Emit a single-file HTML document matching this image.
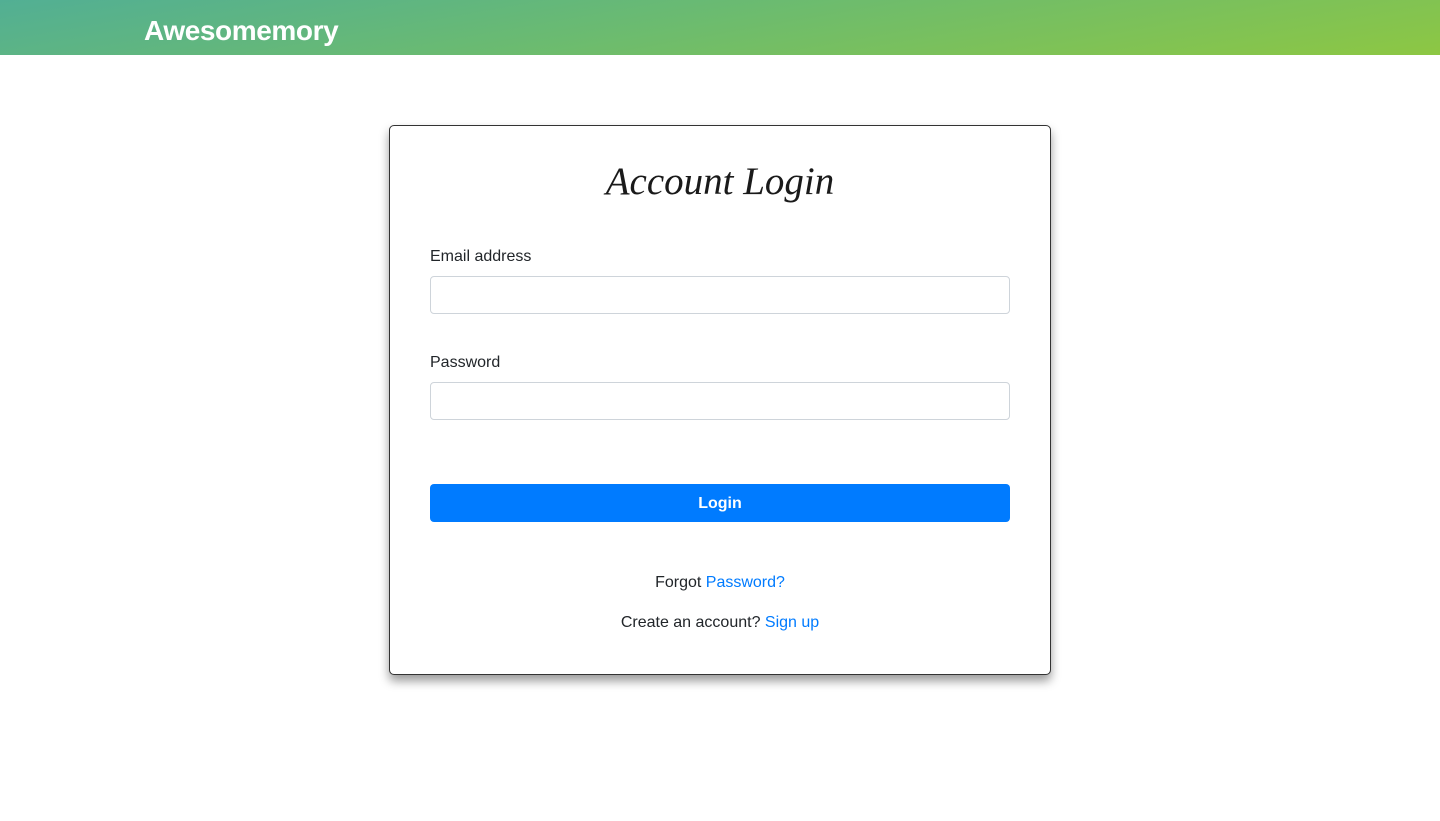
<!DOCTYPE html>
<html><head><meta charset="utf-8"><style>
*{box-sizing:border-box;margin:0;padding:0}
body{width:1440px;height:821px;background:#fff;font-family:"Liberation Sans",sans-serif;color:#212529;position:relative;overflow:hidden}
.hdr{position:absolute;left:0;top:0;width:1440px;height:55px;background:linear-gradient(170deg,#52af94 0%,#6bbb70 45%,#8dc743 100%)}
.hdr span{position:absolute;left:144px;top:15px;font-size:28px;font-weight:bold;color:#fff;letter-spacing:-0.4px}
.card{position:absolute;left:389px;top:125px;width:662px;height:550px;border:1px solid #333;border-radius:5px;background:#fff;box-shadow:0 6px 10px rgba(0,0,0,.4)}
h1{position:absolute;left:0;width:100%;top:33px;text-align:center;font-family:"Liberation Serif",serif;font-style:italic;font-weight:normal;font-size:39px;color:#1a1a1a}
.lbl{position:absolute;left:40px;font-size:16px}
.inp{position:absolute;left:40px;width:580px;height:38px;border:1px solid #ced4da;border-radius:4px}
.btn{position:absolute;left:40px;top:358px;width:580px;height:38px;background:#007bff;border-radius:4px;color:#fff;font-weight:bold;font-size:16px;text-align:center;line-height:40px}
.t{position:absolute;left:0;width:100%;text-align:center;font-size:16px}
a{color:#007bff;text-decoration:none}
</style></head><body>
<div class="hdr"><span>Awesomemory</span></div>
<div class="card">
<h1>Account Login</h1>
<div class="lbl" style="top:122px">Email address</div>
<div class="inp" style="top:150px"></div>
<div class="lbl" style="top:228px">Password</div>
<div class="inp" style="top:256px"></div>
<div class="btn">Login</div>
<div class="t" style="top:448px">Forgot <a>Password?</a></div>
<div class="t" style="top:488px">Create an account? <a>Sign up</a></div>
</div>
</body></html>
